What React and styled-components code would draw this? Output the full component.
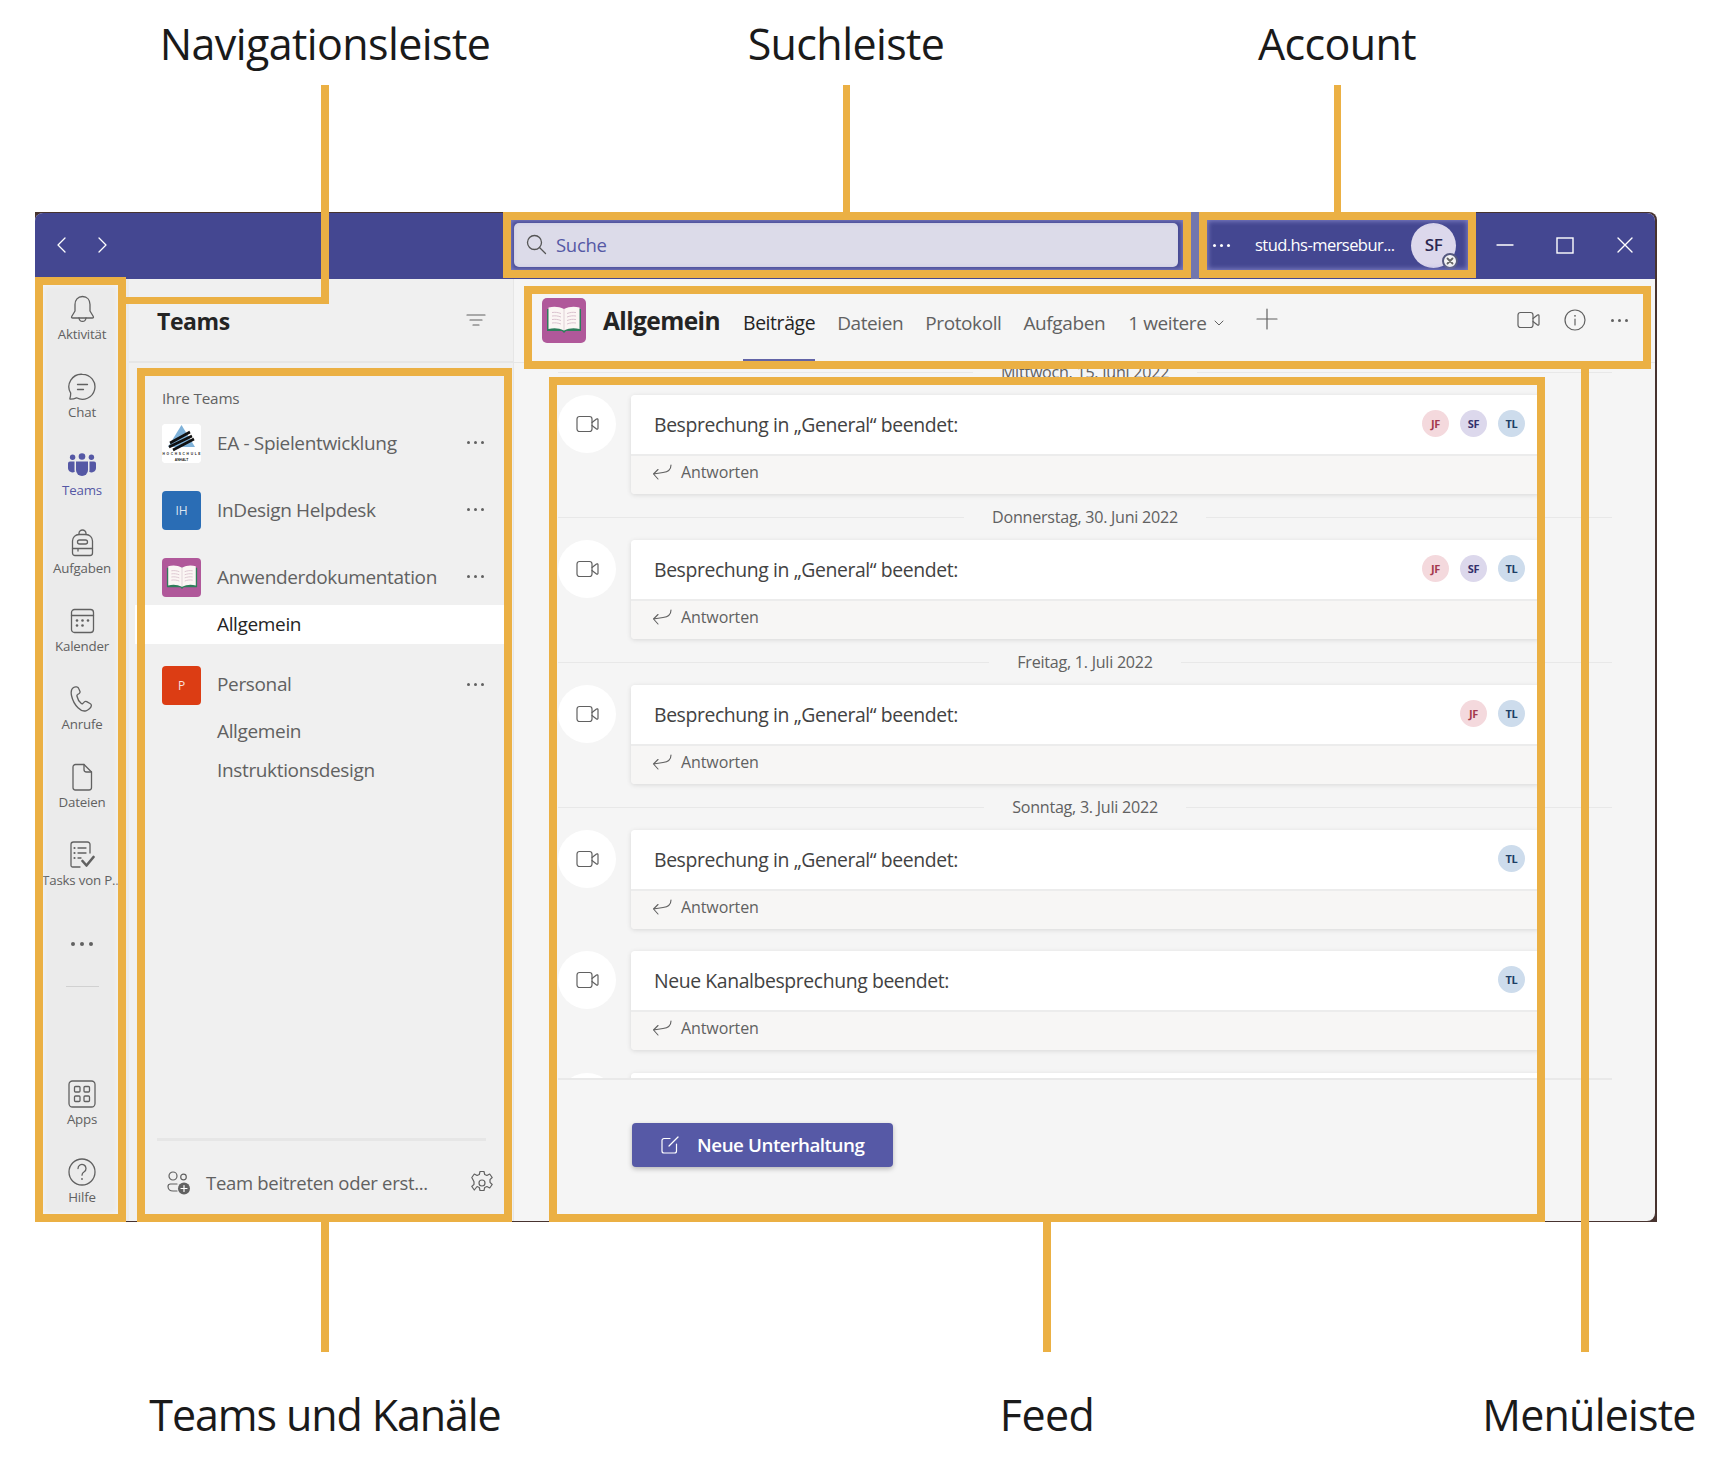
import React from 'react';
import styled, { createGlobalStyle } from 'styled-components';

const ORANGE = '#ebb044';
const FONT = '"Open Sans", "Noto Sans", sans-serif';

const Global = createGlobalStyle`
  html, body { margin: 0; background: #fff; }
  body { font-family: ${FONT}; width: 1717px; height: 1471px; overflow: hidden; }
  * { box-sizing: border-box; }
`;

const Page = styled.div`
  position: relative;
  width: 1717px;
  height: 1471px;
  padding: 212px 60px 249px 35px;
`;

const Win = styled.div`
  width: 1622px;
  height: 1010px;
  background: #47332f;
  padding: 1px 2px 1px 0;
  border-radius: 0 8px 0 0;
`;

const WinInner = styled.div`
  height: 100%;
  display: flex;
  flex-direction: column;
  border-radius: 8px;
  overflow: hidden;
  background: #f5f5f5;
`;

const TitleBar = styled.header`
  flex: 0 0 66px;
  display: flex;
  align-items: center;
  padding-bottom: 2px;
  background: #444791;
  color: #fff;
`;

const NavArrows = styled.div`
  flex: 0 0 479px;
  display: flex;
  gap: 22px;
  padding-left: 18px;
  color: #fff;
`;

const SearchBox = styled.div`
  flex: 0 0 664px;
  height: 44px;
  display: flex;
  align-items: center;
  gap: 9px;
  padding: 0 0 2px 12px;
  background: #dcdbe9;
  border-radius: 5px;
  color: #5558a5;
  font-size: 18.5px;
  letter-spacing: -0.3px;
`;

const SearchGlyph = styled.span`
  display: flex;
  color: #555;
`;

const Account = styled.div`
  flex: 0 0 263px;
  margin-left: 28px;
  display: flex;
  align-items: center;
  padding-left: 7px;
`;

const Dots = styled.span`
  display: inline-flex;
  gap: ${(p) => p.$gap || 4}px;
  color: ${(p) => p.$color || '#616161'};
  & > i {
    width: ${(p) => p.$size || 3}px;
    height: ${(p) => p.$size || 3}px;
    border-radius: 50%;
    background: currentColor;
  }
`;

const AccountName = styled.span`
  margin-left: 25px;
  width: 156px;
  padding-bottom: 2px;
  font-size: 16.5px;
  letter-spacing: -0.55px;
  white-space: nowrap;
`;

const Me = styled.div`
  position: relative;
  width: 45px;
  height: 45px;
  padding-bottom: 2px;
  border-radius: 50%;
  background: #dcd8ec;
  color: #2b2750;
  display: flex;
  align-items: center;
  justify-content: center;
  font-size: 17px;
  font-weight: 600;
  letter-spacing: -0.5px;
`;

const Badge = styled.span`
  position: absolute;
  right: -2px;
  bottom: -1px;
  width: 16px;
  height: 16px;
  border-radius: 50%;
  background: #f4f4f4;
  border: 2px solid #55597f;
  display: flex;
  align-items: center;
  justify-content: center;
  color: #666;
`;

const WinButtons = styled.div`
  flex: 1;
  display: flex;
  margin-left: 6px;
`;

const WinButton = styled.div`
  width: 60px;
  display: flex;
  justify-content: center;
  align-items: center;
  color: #fff;
`;

const Body = styled.div`
  flex: 1;
  min-height: 0;
  display: flex;
`;

const Rail = styled.nav`
  flex: 0 0 94px;
  display: flex;
  flex-direction: column;
  align-items: center;
  padding-top: 8px;
  background: #ebebeb;
`;

const RailItem = styled.div`
  flex: 0 0 78px;
  width: 100%;
  display: flex;
  flex-direction: column;
  align-items: center;
  color: ${(p) => (p.$active ? '#5558a5' : '#616161')};
`;

const RailIcon = styled.div`
  height: 39px;
  padding-top: 4px;
  display: flex;
  align-items: center;
  justify-content: center;
`;

const RailLabel = styled.div`
  height: 16px;
  line-height: 16px;
  font-size: 13.3px;
  letter-spacing: -0.2px;
  white-space: nowrap;
  text-align: center;
`;

const RailMore = styled.div`
  margin-top: 23px;
  height: 20px;
  display: flex;
  align-items: center;
`;

const RailRule = styled.div`
  margin-top: 32px;
  width: 33px;
  height: 1px;
  background: #d1d1d1;
`;

const RailBottom = styled.div`
  margin-top: auto;
  height: 149px;
  width: 100%;
  display: flex;
  flex-direction: column;
  flex-shrink: 0;
  & > :last-child { flex-basis: 71px; }
`;

const TeamsPanel = styled.aside`
  flex: 0 0 385px;
  display: flex;
  flex-direction: column;
  background: #f0f0f0;
  border-right: 1px solid #e6e6e6;
`;

const PanelHead = styled.div`
  flex: 0 0 84px;
  display: flex;
  align-items: flex-start;
  justify-content: space-between;
  padding: 25px 28px 0 28px;
  border-bottom: 2px solid #e6e6e6;
  margin-right: -1px;
`;

const PanelTitle = styled.h2`
  margin: 0;
  font-size: 23px;
  line-height: 34px;
  font-weight: 700;
  color: #242424;
  letter-spacing: -0.4px;
`;

const FilterGlyph = styled.span`
  color: #616161;
  margin-top: 6px;
`;

const TeamList = styled.div`
  flex: 1;
  padding-top: 24px;
`;

const ListCaption = styled.div`
  height: 22px;
  line-height: 22px;
  padding-left: 33px;
  font-size: 15.3px;
  letter-spacing: -0.2px;
  color: #616161;
`;

const TeamRow = styled.div`
  height: ${(p) => p.$h || 67}px;
  display: flex;
  align-items: center;
  padding: 0 29px 0 33px;
  margin-top: ${(p) => p.$mt || 0}px;
`;

const TeamAvatar = styled.div`
  flex: 0 0 39px;
  height: 39px;
  margin-top: 2px;
  border-radius: 4px;
  overflow: hidden;
  display: flex;
  align-items: center;
  justify-content: center;
  background: ${(p) => p.$bg || '#fff'};
  color: rgba(255, 255, 255, 0.85);
  font-size: 12px;
`;

const TeamName = styled.span`
  flex: 1;
  margin-left: 16px;
  font-size: 19px;
  letter-spacing: -0.35px;
  color: #616161;
  white-space: nowrap;
`;

const Channel = styled.div`
  height: 39px;
  line-height: 39px;
  padding-left: ${(p) => (p.$active ? 82 : 88)}px;
  margin: ${(p) => (p.$active ? '-5px 8px 0 6px' : 0)};
  background: ${(p) => (p.$active ? '#fff' : 'transparent')};
  color: ${(p) => (p.$active ? '#242424' : '#616161')};
  font-size: 19px;
  letter-spacing: -0.35px;
  position: relative;
`;

const PanelFoot = styled.div`
  flex: 0 0 83px;
  margin: 0 27px 0 28px;
  display: flex;
  align-items: center;
  border-top: 3px solid #e6e6e6;
  padding: 3px 0 0 10px;
  color: #616161;
`;

const FootText = styled.span`
  flex: 1;
  margin-left: 15px;
  font-size: 18.5px;
  letter-spacing: -0.3px;
  white-space: nowrap;
`;

const GearGlyph = styled.span`
  display: flex;
  margin: -2px -8px 0 0;
`;

const Main = styled.main`
  flex: 1;
  min-width: 0;
  display: flex;
  flex-direction: column;
`;

const MainHead = styled.div`
  flex: 0 0 84px;
  display: flex;
  align-items: flex-start;
  padding-left: 28px;
  border-bottom: 1px solid #e6e6e6;
  color: #616161;
`;

const ChannelAvatar = styled.div`
  flex: 0 0 44px;
  height: 45px;
  margin-top: 19px;
  border-radius: 5px;
  background: #b0589a;
  display: flex;
  align-items: center;
  justify-content: center;
`;

const ChannelTitle = styled.h1`
  margin: 22px 0 0 17px;
  width: 140px;
  font-size: 24.5px;
  line-height: 40px;
  font-weight: 700;
  color: #242424;
  letter-spacing: -0.6px;
  white-space: nowrap;
`;

const Tab = styled.div`
  height: 83px;
  padding-top: 29px;
  margin-right: ${(p) => p.$mr || 0}px;
  font-size: ${(p) => (p.$active ? 19.4 : 19)}px;
  line-height: 30px;
  letter-spacing: -0.4px;
  white-space: nowrap;
  color: ${(p) => (p.$active ? '#242424' : '#616161')};
  border-bottom: 3px solid ${(p) => (p.$active ? '#6264a7' : 'transparent')};
`;

const HeadIcon = styled.div`
  margin-top: ${(p) => p.$mt || 30}px;
  margin-left: ${(p) => p.$ml || 0}px;
  height: 22px;
  display: flex;
  align-items: center;
`;

const FeedClip = styled.div`
  flex: 1;
  min-height: 0;
  overflow: hidden;
`;

const Feed = styled.div`
  margin-top: -14px;
  padding: 0 43px 0 44px;
`;

const DateRow = styled.div`
  height: 46px;
  display: flex;
  align-items: center;
  gap: 28px;
  font-size: 16.1px;
  letter-spacing: -0.25px;
  color: #616161;
  white-space: nowrap;
  &::before, &::after {
    content: '';
    flex: 1;
    height: 1px;
    background: #e8e8e8;
  }
`;

const Post = styled.div`
  display: flex;
  gap: 15px;
  padding-right: 72px;
  margin-top: ${(p) => p.$mt || 0}px;
`;

const PostDot = styled.div`
  flex: 0 0 58px;
  height: 58px;
  border-radius: 50%;
  background: #fff;
  display: flex;
  align-items: center;
  justify-content: center;
  color: #616161;
`;

const Card = styled.div`
  flex: 1;
  border-radius: 4px;
  overflow: hidden;
  box-shadow: 0 1px 5px rgba(0, 0, 0, 0.12);
`;

const CardHead = styled.div`
  height: 61px;
  display: flex;
  align-items: center;
  justify-content: space-between;
  padding: 0 15px 0 23px;
  background: #fff;
  border-bottom: 2px solid #ececec;
`;

const CardTitle = styled.span`
  font-size: 19.4px;
  font-weight: 500;
  letter-spacing: -0.4px;
  color: #424242;
`;

const Attendees = styled.div`
  display: flex;
  gap: 11px;
  margin-bottom: 3px;
`;

const Attendee = styled.span`
  width: 27px;
  height: 27px;
  border-radius: 50%;
  display: flex;
  align-items: center;
  justify-content: center;
  font-size: 11px;
  font-weight: 700;
  letter-spacing: -0.4px;
  background: ${(p) => p.$bg};
  color: ${(p) => p.$fg};
`;

const Reply = styled.div`
  height: 38px;
  display: flex;
  align-items: center;
  gap: 9px;
  padding: 0 0 6px 21px;
  background: #f7f6f5;
  color: #616161;
  font-size: 16px;
  letter-spacing: -0.1px;
`;

const Composer = styled.div`
  flex: 0 0 143px;
  margin: 0 43px 0 44px;
  padding: 43px 0 0 74px;
  border-top: 2px solid #e9e9e9;
`;

const NewButton = styled.div`
  width: 261px;
  height: 44px;
  display: flex;
  align-items: center;
  gap: 18px;
  padding-left: 29px;
  border-radius: 4px;
  background: #5659a6;
  color: #fff;
  font-size: 18.8px;
  font-weight: 600;
  letter-spacing: -0.45px;
  box-shadow: 0 2px 5px rgba(0, 0, 0, 0.25);
`;

/* annotations lie over the screenshot */
const Frame = styled.div`
  position: absolute;
  left: ${(p) => p.$x}px;
  top: ${(p) => p.$y}px;
  width: ${(p) => p.$w}px;
  height: ${(p) => p.$h}px;
  border: 8px solid ${ORANGE};
  box-shadow: ${(p) => (p.$glow ? `inset 0 0 5px 1px ${p.$glow}` : 'none')};
  pointer-events: none;
`;

const Leader = styled.div`
  position: absolute;
  left: ${(p) => p.$x}px;
  top: ${(p) => p.$y}px;
  width: ${(p) => p.$w}px;
  height: ${(p) => p.$h}px;
  background: ${(p) => p.$color || ORANGE};
`;

const Caption = styled.div`
  position: absolute;
  left: ${(p) => p.$x}px;
  top: ${(p) => p.$y}px;
  width: 400px;
  text-align: center;
  font-size: 43px;
  line-height: 56px;
  color: #1a1a1a;
  white-space: nowrap;
  letter-spacing: ${(p) => p.$ls ?? -0.6}px;
`;

const Svg = ({ w, h, vb, children, sw = 1.3 }) => (
  <svg width={w} height={h} viewBox={vb || `0 0 ${w} ${h}`} fill="none" stroke="currentColor" strokeWidth={sw} strokeLinecap="round" strokeLinejoin="round">
    {children}
  </svg>
);

const ThreeDots = (props) => (
  <Dots {...props}>
    <i />
    <i />
    <i />
  </Dots>
);

const VideoIcon = () => (
  <Svg w={23} h={18} sw={1.2}>
    <rect x="1" y="1.5" width="15" height="15" rx="2.5" />
    <path d="M16 7.5l4.5-3.5c.6-.4 1.5-.1 1.5.8v8.4c0 .9-.9 1.2-1.500.8L16 10.500" />
  </Svg>
);

const ReplyIcon = () => (
  <Svg w={20} h={18} sw={1.1}>
    <path d="M19 2c0 5-4 7-8 7.5L1.5 11M6 6.5L1.5 11 6 16" />
  </Svg>
);

const BookIcon = ({ size }) => (
  <svg width={size} height={size * 0.78} viewBox="0 0 36 28">
    <path d="M1 3h34v22H20l-2 2-2-2H1z" fill="#2f7d5b" />
    <path d="M2.5 1.5C8 0 13 .5 18 3c5-2.5 10-3 15.5-1.5V23C28 21.5 23 22 18 24.500 13 22 8 21.500 2.500 23z" fill="#fbf6f4" />
    <path d="M18 3v21" stroke="#d9c9cf" strokeWidth=".8" />
    <path d="M6 6.5c3-.5 6-.2 9 1M6 10c3-.5 6-.2 9 1M6 13.5c3-.5 6-.2 9 1M6 17c3-.5 6-.2 9 1M30 6.5c-3-.5-6-.2-9 1M30 10c-3-.5-6-.2-9 1M30 13.5c-3-.5-6-.2-9 1M30 17c-3-.5-6-.2-9 1" stroke="#d6bcc9" strokeWidth=".9" fill="none" />
  </svg>
);

const EaLogo = () => (
  <svg width="39" height="39" viewBox="0 0 39 39">
    <rect width="39" height="39" fill="#fff" />
    <path d="M19.5 1L33 23H6z" fill="#7fb2d9" />
    <path d="M8 19L28 8M7 23L30 12M11 26L32 15" stroke="#111" strokeWidth="2.6" />
    <text x="19.5" y="31" textAnchor="middle" fontSize="3.3" fontWeight="700" fontFamily="Liberation Sans, sans-serif" fill="#222" textLength="38">
      HOCHSCHULE
    </text>
    <text x="19.5" y="37" textAnchor="middle" fontSize="3.3" fontWeight="700" fontFamily="Liberation Sans, sans-serif" fill="#222">
      ANHALT
    </text>
  </svg>
);

const railIcons = {
  bell: (
    <Svg w={25} h={28}>
      <path d="M12.5 1.5C7.7 1.5 5 5 5 9.5V16l-3.3 5.5c-.4.8 0 1.5 1 1.5h19.6c1 0 1.4-.7 1-1.5L20 16V9.5c0-4.5-2.7-8-7.5-8z" />
      <path d="M9 23c.3 2 1.7 3.4 3.5 3.4S15.7 25 16 23" />
    </Svg>
  ),
  chat: (
    <Svg w={28} h={28}>
      <path d="M14.5 1.3A12.5 12.5 0 1 1 8.5 24.8c-1.8.8-4 1.3-6 1.4-.4 0-.7-.3-.6-.7.5-1.7.8-3.6.8-5.3A12.5 12.5 0 0 1 14.5 1.3z" />
      <path d="M9.5 11.5h10M9.5 16.5h6" />
    </Svg>
  ),
  teams: (
    <svg width="28" height="24" viewBox="0 0 28 24" fill="currentColor">
      <circle cx="14" cy="3.5" r="3.3" />
      <circle cx="4.6" cy="4.3" r="2.7" />
      <circle cx="23.4" cy="4.3" r="2.7" />
      <path d="M8 8.5h12V17a6 6 0 0 1-12 0z" />
      <path d="M6.5 8.5H2a2 2 0 0 0-2 2V15a4.5 4.5 0 0 0 6.8 3.8 9 9 0 0 1-.3-2.3z" />
      <path d="M21.5 8.5H26a2 2 0 0 1 2 2V15a4.5 4.5 0 0 1-6.8 3.8c.2-.7.3-1.5.3-2.3z" />
    </svg>
  ),
  bag: (
    <Svg w={23} h={28}>
      <path d="M8 5.5v-1a3.5 3.5 0 0 1 7 0v1" />
      <path d="M1.5 12A6.5 6.5 0 0 1 8 5.5h7a6.5 6.5 0 0 1 6.5 6.5v12a2.5 2.5 0 0 1-2.5 2.5H4A2.5 2.5 0 0 1 1.5 24z" />
      <rect x="6.5" y="11" width="10" height="4" rx="2" />
      <path d="M1.5 19.5h20M7 19.5V22" />
    </Svg>
  ),
  calendar: (
    <Svg w={25} h={26}>
      <rect x="1.5" y="1.5" width="22" height="23" rx="3" />
      <path d="M1.5 7.5h22" />
      <g fill="currentColor" stroke="none">
        <circle cx="7" cy="12.5" r="1.3" />
        <circle cx="12.5" cy="12.5" r="1.3" />
        <circle cx="18" cy="12.5" r="1.3" />
        <circle cx="7" cy="17.5" r="1.3" />
        <circle cx="12.5" cy="17.5" r="1.3" />
      </g>
    </Svg>
  ),
  call: (
    <Svg w={24} h={28}>
      <path d="M3.5 2.5C1.3 3.8.8 7 1.5 10.5c.9 4.3 3.3 9 6.5 12.3 2.3 2.4 5.3 3.7 8 3 2.3-.6 5-3 5.3-5 .2-1-.4-1.8-1.3-2.3l-3.3-1.9c-.8-.4-1.7-.3-2.3.3l-1.5 1.5c-.5.4-1.100.5-1.600.1-2.300-1.900-3.800-4.700-4.400-7.500-.1-.6.1-1.200.7-1.500l1.600-1c.7-.5 1-1.300.8-2.100L8.700 3.500c-.4-1.500-3.200-2.200-5.200-1z" />
    </Svg>
  ),
  file: (
    <Svg w={21} h={28}>
      <path d="M3.5 1.5H12l7.5 7.5v15.5a2.5 2.5 0 0 1-2.5 2.5H3.5A2.5 2.5 0 0 1 1 24.5V4a2.5 2.5 0 0 1 2.5-2.5z" />
      <path d="M12 1.5v5A2.5 2.5 0 0 0 14.5 9h5" />
    </Svg>
  ),
  tasks: (
    <Svg w={26} h={27}>
      <path d="M21 12V3.5A2.5 2.5 0 0 0 18.5 1h-14A2.5 2.5 0 0 0 2 3.5v21A1.5 1.5 0 0 0 3.5 26H11" />
      <path d="M9 7h8M9 12h8M9 17h3" />
      <g fill="currentColor" stroke="none">
        <circle cx="5.5" cy="7" r="1.1" />
        <circle cx="5.5" cy="12" r="1.1" />
        <circle cx="5.5" cy="17" r="1.1" />
      </g>
      <path d="M13.5 20l4 4.500 7-8.500" strokeWidth="2.6" />
    </Svg>
  ),
  apps: (
    <Svg w={28} h={28}>
      <rect x="1" y="1" width="26" height="26" rx="3.5" />
      <rect x="6.5" y="6.5" width="5.5" height="5.5" rx="1" />
      <rect x="16" y="6.5" width="5.5" height="5.5" rx="1" />
      <rect x="6.5" y="16" width="5.5" height="5.5" rx="1" />
      <rect x="16" y="16" width="5.5" height="5.5" rx="1" />
    </Svg>
  ),
  help: (
    <Svg w={28} h={28}>
      <circle cx="14" cy="14" r="13" />
      <path d="M10 10.5a4 4 0 1 1 6.2 3.3c-1.4.9-2.2 1.7-2.2 3.4" />
      <circle cx="14" cy="21" r=".9" fill="currentColor" stroke="none" />
    </Svg>
  ),
};

const railTop = [
  ['bell', 'Aktivität'],
  ['chat', 'Chat'],
  ['teams', 'Teams'],
  ['bag', 'Aufgaben'],
  ['calendar', 'Kalender'],
  ['call', 'Anrufe'],
  ['file', 'Dateien'],
  ['tasks', 'Tasks von P...'],
];

const JF = ['JF', '#f4d9dd', '#a4384e'];
const SF = ['SF', '#dcd8ec', '#33306b'];
const TL = ['TL', '#cddcec', '#1c3f66'];

const posts = [
  { date: null, title: 'Besprechung in „General“ beendet:', people: [JF, SF, TL] },
  { date: 'Donnerstag, 30. Juni 2022', title: 'Besprechung in „General“ beendet:', people: [JF, SF, TL] },
  { date: 'Freitag, 1. Juli 2022', title: 'Besprechung in „General“ beendet:', people: [JF, TL] },
  { date: 'Sonntag, 3. Juli 2022', title: 'Besprechung in „General“ beendet:', people: [TL] },
  { gap: 22, title: 'Neue Kanalbesprechung beendet:', people: [TL] },
];

export default function App() {
  return (
    <Page>
      <Global />
      <Win>
        <WinInner>
          <TitleBar>
            <NavArrows>
              <Svg w={18} h={18}><path d="M12 2L5 9l7 7" /></Svg>
              <Svg w={18} h={18}><path d="M6 2l7 7-7 7" /></Svg>
            </NavArrows>
            <SearchBox>
              <SearchGlyph>
                <Svg w={21} h={21}>
                  <circle cx="8.5" cy="8.5" r="7" />
                  <path d="M13.5 13.5l6 6" />
                </Svg>
              </SearchGlyph>
              Suche
            </SearchBox>
            <Account>
              <ThreeDots $color="#fff" $gap={4} />
              <AccountName>stud.hs-mersebur...</AccountName>
              <Me>
                SF
                <Badge>
                  <Svg w={8} h={8} sw={1.8}><path d="M1.5 1.5l5 5M6.5 1.5l-5 5" /></Svg>
                </Badge>
              </Me>
            </Account>
            <WinButtons>
              <WinButton><Svg w={18} h={4} sw={1.4}><path d="M1 2h16" /></Svg></WinButton>
              <WinButton><Svg w={18} h={17} sw={1.4}><rect x="1" y="1" width="16" height="15" strokeLinejoin="miter" /></Svg></WinButton>
              <WinButton><Svg w={18} h={18} sw={1.4}><path d="M2 2l14 14M16 2L2 16" /></Svg></WinButton>
            </WinButtons>
          </TitleBar>
          <Body>
            <Rail>
              {railTop.map(([icon, label]) => (
                <RailItem key={icon} $active={icon === 'teams'}>
                  <RailIcon>{railIcons[icon]}</RailIcon>
                  <RailLabel>{label}</RailLabel>
                </RailItem>
              ))}
              <RailMore><ThreeDots $size={4} $gap={5} /></RailMore>
              <RailRule />
              <RailBottom>
                <RailItem>
                  <RailIcon>{railIcons.apps}</RailIcon>
                  <RailLabel>Apps</RailLabel>
                </RailItem>
                <RailItem>
                  <RailIcon>{railIcons.help}</RailIcon>
                  <RailLabel>Hilfe</RailLabel>
                </RailItem>
              </RailBottom>
            </Rail>
            <TeamsPanel>
              <PanelHead>
                <PanelTitle>Teams</PanelTitle>
                <FilterGlyph>
                  <Svg w={20} h={14} sw={1.2}><path d="M1 2h18M4 7h12M7 12h6" /></Svg>
                </FilterGlyph>
              </PanelHead>
              <TeamList>
                <ListCaption>Ihre Teams</ListCaption>
                <TeamRow>
                  <TeamAvatar><EaLogo /></TeamAvatar>
                  <TeamName>EA - Spielentwicklung</TeamName>
                  <ThreeDots />
                </TeamRow>
                <TeamRow>
                  <TeamAvatar $bg="#2a6db5">IH</TeamAvatar>
                  <TeamName>InDesign Helpdesk</TeamName>
                  <ThreeDots />
                </TeamRow>
                <TeamRow>
                  <TeamAvatar $bg="#b0589a"><BookIcon size={32} /></TeamAvatar>
                  <TeamName>Anwenderdokumentation</TeamName>
                  <ThreeDots />
                </TeamRow>
                <Channel $active>Allgemein</Channel>
                <TeamRow $h={56} $mt={12}>
                  <TeamAvatar $bg="#dc3d14">P</TeamAvatar>
                  <TeamName>Personal</TeamName>
                  <ThreeDots />
                </TeamRow>
                <Channel>Allgemein</Channel>
                <Channel>Instruktionsdesign</Channel>
              </TeamList>
              <PanelFoot>
                <Svg w={24} h={24} sw={1.2}>
                  <circle cx="6" cy="5" r="4" />
                  <circle cx="16.5" cy="6" r="2.8" />
                  <path d="M10 13H3.5A2.5 2.5 0 0 0 1 15.5c0 2.5 2 4.500 5 4.500h4" />
                  <circle cx="17" cy="17.5" r="6" fill="currentColor" stroke="none" />
                  <path d="M17 14.5v6M14 17.5h6" stroke="#fff" />
                </Svg>
                <FootText>Team beitreten oder erst...</FootText>
                <GearGlyph>
                  <Svg w={24} h={24} sw={1.2}>
                    <path d="M10 1.5h4l.7 3 2.2 1 2.8-1.5 2.5 3.5-2.2 2.2v2.6l2.2 2.2-2.5 3.5-2.8-1.5-2.2 1-.7 3h-4l-.7-3-2.2-1L4.3 20l-2.5-3.5L4 14.3v-2.6L1.8 7.5 4.3 4l2.800 1.500 2.200-1z" />
                    <circle cx="12" cy="13" r="3" />
                  </Svg>
                </GearGlyph>
              </PanelFoot>
            </TeamsPanel>
            <Main>
              <MainHead>
                <ChannelAvatar><BookIcon size={36} /></ChannelAvatar>
                <ChannelTitle>Allgemein</ChannelTitle>
                <Tab $active $mr={22}>Beiträge</Tab>
                <Tab $mr={22}>Dateien</Tab>
                <Tab $mr={22}>Protokoll</Tab>
                <Tab $mr={23}>Aufgaben</Tab>
                <Tab>1 weitere</Tab>
                <HeadIcon $mt={33} $ml={8}><Svg w={10} h={6} sw={1}><path d="M1 1l4 4 4-4" /></Svg></HeadIcon>
                <HeadIcon $mt={29} $ml={32}><Svg w={22} h={22} sw={1.2}><path d="M11 1v20M1 11h20" /></Svg></HeadIcon>
                <HeadIcon $mt={30} $ml={239}><VideoIcon /></HeadIcon>
                <HeadIcon $mt={30} $ml={24}>
                  <Svg w={22} h={22} sw={1.2}>
                    <circle cx="11" cy="11" r="10" />
                    <path d="M11 10v6" />
                    <circle cx="11" cy="6.8" r=".9" fill="currentColor" stroke="none" />
                  </Svg>
                </HeadIcon>
                <HeadIcon $mt={30} $ml={25}><ThreeDots /></HeadIcon>
              </MainHead>
              <FeedClip>
                <Feed>
                  <DateRow>Mittwoch, 15. Juni 2022</DateRow>
                  {posts.map((post, i) => (
                    <React.Fragment key={i}>
                      {post.date && <DateRow>{post.date}</DateRow>}
                      <Post $mt={post.gap}>
                        <PostDot><VideoIcon /></PostDot>
                        <Card>
                          <CardHead>
                            <CardTitle>{post.title}</CardTitle>
                            <Attendees>
                              {post.people.map(([name, bg, fg]) => (
                                <Attendee key={name} $bg={bg} $fg={fg}>{name}</Attendee>
                              ))}
                            </Attendees>
                          </CardHead>
                          <Reply><ReplyIcon />Antworten</Reply>
                        </Card>
                      </Post>
                    </React.Fragment>
                  ))}
                  <Post $mt={23}>
                    <PostDot />
                    <Card><CardHead /></Card>
                  </Post>
                </Feed>
              </FeedClip>
              <Composer>
                <NewButton>
                  <Svg w={18} h={18} sw={1.2}>
                    <path d="M9 2.5H3a2 2 0 0 0-2 2V15a2 2 0 0 0 2 2h10.5a2 2 0 0 0 2-2V8" />
                    <path d="M8 10l9-9" />
                  </Svg>
                  Neue Unterhaltung
                </NewButton>
              </Composer>
            </Main>
          </Body>
        </WinInner>
      </Win>

      <Frame $x={35} $y={277} $w={91} $h={945} $glow="rgba(255, 255, 255, 0.45)" />
      <Frame $x={137} $y={368} $w={375} $h={854} />
      <Frame $x={503} $y={212} $w={688} $h={66} $glow="rgba(150, 150, 215, 0.75)" />
      <Frame $x={1199} $y={212} $w={277} $h={66} $glow="rgba(150, 150, 215, 0.75)" />
      <Frame $x={524} $y={286} $w={1127} $h={83} />
      <Frame $x={549} $y={377} $w={996} $h={845} />

      <Leader $x={1191} $y={212} $w={8} $h={67} $color="#7276ae" />
      <Leader $x={321} $y={85} $w={8} $h={219} />
      <Leader $x={126} $y={297} $w={203} $h={7} />
      <Leader $x={843} $y={85} $w={7} $h={127} />
      <Leader $x={1334} $y={85} $w={7} $h={127} />
      <Leader $x={321} $y={1222} $w={8} $h={130} />
      <Leader $x={1043} $y={1222} $w={8} $h={130} />
      <Leader $x={1581} $y={369} $w={8} $h={983} />

      <Caption $x={125} $y={16}>Navigationsleiste</Caption>
      <Caption $x={646} $y={16}>Suchleiste</Caption>
      <Caption $x={1137} $y={16}>Account</Caption>
      <Caption $x={125} $y={1387} $ls={-1.1}>Teams und Kanäle</Caption>
      <Caption $x={847} $y={1387}>Feed</Caption>
      <Caption $x={1389} $y={1387} $ls={-0.8}>Menüleiste</Caption>
    </Page>
  );
}
